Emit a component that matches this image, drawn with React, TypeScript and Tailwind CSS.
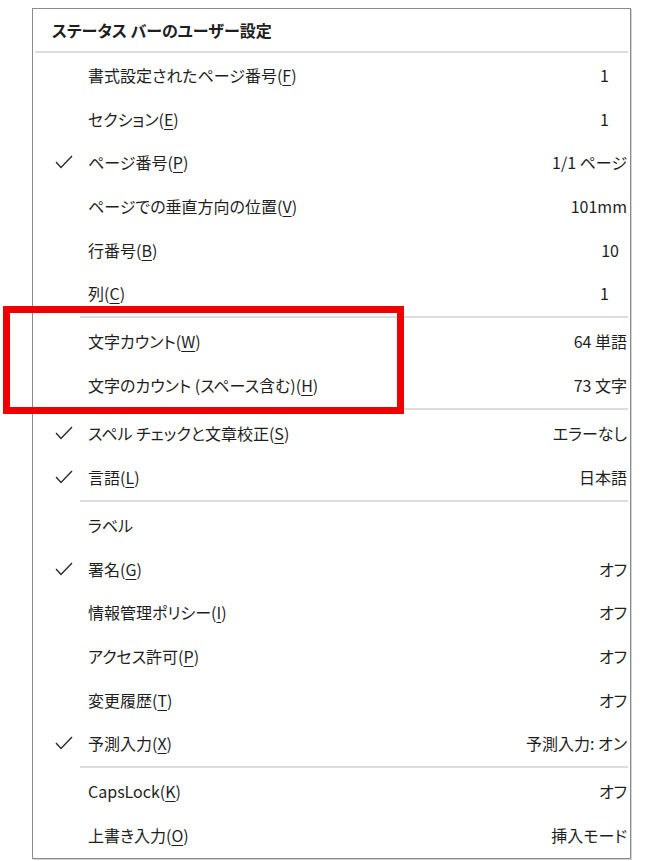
type Item = {
  label: string;
  accel?: string;
  value?: string;
  checked?: boolean;
  pad?: string;
};

const groups: Item[][] = [
  [
    { label: "書式設定されたページ番号", accel: "F", value: "1", pad: "pr-[21px]" },
    { label: "セクション", accel: "E", value: "1", pad: "pr-[21px]" },
    { label: "ページ番号", accel: "P", value: "1/1 ページ", checked: true },
    { label: "ページでの垂直方向の位置", accel: "V", value: "101mm" },
    { label: "行番号", accel: "B", value: "10", pad: "pr-[11px]" },
    { label: "列", accel: "C", value: "1", pad: "pr-[21px]" },
  ],
  [
    { label: "文字カウント", accel: "W", value: "64 単語" },
    { label: "文字のカウント (スペース含む)", accel: "H", value: "73 文字" },
  ],
  [
    { label: "スペル チェックと文章校正", accel: "S", value: "エラーなし", checked: true },
    { label: "言語", accel: "L", value: "日本語", checked: true },
  ],
  [
    { label: "ラベル" },
    { label: "署名", accel: "G", value: "オフ", checked: true },
    { label: "情報管理ポリシー", accel: "I", value: "オフ" },
    { label: "アクセス許可", accel: "P", value: "オフ" },
    { label: "変更履歴", accel: "T", value: "オフ" },
    { label: "予測入力", accel: "X", value: "予測入力: オン", checked: true },
  ],
  [
    { label: "CapsLock", accel: "K", value: "オフ" },
    { label: "上書き入力", accel: "O", value: "挿入モード" },
  ],
];

function Check() {
  return (
    <svg width="18" height="14" viewBox="0 0 18 14" fill="none" aria-hidden="true">
      <polyline points="1,7 6,12.5 17,1" stroke="#2b2b2b" strokeWidth="1.4" strokeLinejoin="miter" />
    </svg>
  );
}

function Row({ item }: { item: Item }) {
  return (
    <div className="flex h-[43.7px] items-center">
      <div className="flex w-[55px] shrink-0 justify-end pr-[15px]">{item.checked && <Check />}</div>
      <div className="flex-1 whitespace-nowrap">
        {item.label}
        {item.accel && (
          <>
            (<span className="underline decoration-1 underline-offset-[3px]">{item.accel}</span>)
          </>
        )}
      </div>
      {item.value && <div className={`whitespace-nowrap pr-[3px] ${item.pad ?? ""}`}>{item.value}</div>}
    </div>
  );
}

export default function App() {
  return (
    <div className="relative min-h-[861px] bg-white pt-[8px] font-['Noto_Sans_CJK_JP',sans-serif] text-[16px] leading-none text-[#1e1e1e] [font-feature-settings:'palt']">
      <div className="ml-[32px] w-[599px] border border-[#8a8a8a] bg-white pb-[1px] shadow-[1px_1px_0_#d4d4d4]">
        <div className="flex h-[42px] items-center pl-[19px] font-bold">ステータス バーのユーザー設定</div>
        <div className="mx-[2px] h-[2px] bg-[#dcdcdc]" />
        {groups.map((group, gi) => (
          <div key={gi}>
            {gi > 0 && (
              <div className="flex h-[4.4px] items-center pl-[47px] pr-[2px]">
                <div className="h-[2px] w-full bg-[#dcdcdc]" />
              </div>
            )}
            {group.map((item) => (
              <Row key={item.label} item={item} />
            ))}
          </div>
        ))}
      </div>
      {/* annotation */}
      <div className="absolute left-[3px] top-[306px] h-[108px] w-[401px] border-[7px] border-[#ee0000]" />
    </div>
  );
}
